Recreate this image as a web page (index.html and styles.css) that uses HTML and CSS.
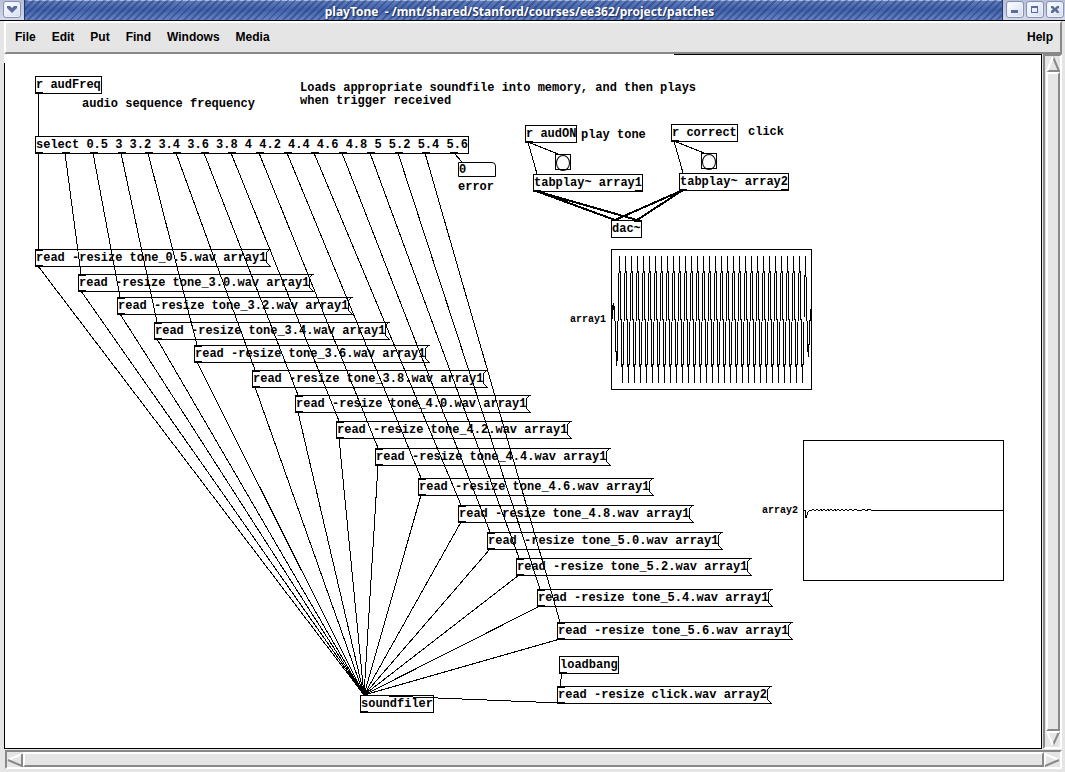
FILE: index.html
```html
<!DOCTYPE html>
<html lang="en">
<head>
<meta charset="utf-8">
<title>playTone</title>
<link rel="stylesheet" href="styles.css">
</head>
<body>
<header class="titlebar">
  <div class="title-group">
    <button class="winbtn" aria-label="Window menu"><svg width="16" height="16" viewBox="0 0 16 16"><path d="M3 4h3l2 2 2-2h3v2l-5 5-5-5z"/></svg></button>
  </div>
  <h1 class="title">playTone  - /mnt/shared/Stanford/courses/ee362/project/patches</h1>
  <div class="title-group title-group-right">
    <button class="winbtn" aria-label="Minimize"><svg width="16" height="16" viewBox="0 0 16 16"><path d="M4 8h7v3H4z"/></svg></button>
    <button class="winbtn" aria-label="Maximize"><svg width="16" height="16" viewBox="0 0 16 16"><path fill-rule="evenodd" d="M4 4h7v7H4zM5 6v4h5V6z"/></svg></button>
    <button class="winbtn" aria-label="Close"><svg width="16" height="16" viewBox="0 0 16 16"><path d="M4 4h2l2 2 2-2h2v2l-2 1 2 3v1h-2L8 9l-2 2H4V9l2-2-2-1z"/></svg></button>
  </div>
</header>
<nav class="menubar">
  <button>File</button><button>Edit</button><button>Put</button><button>Find</button><button>Windows</button><button>Media</button><button class="help">Help</button>
</nav>
<div class="workspace">
<main class="canvas">
  <div class="obj n-audfreq">r audFreq</div>
  <p class="note n-seq">audio sequence frequency</p>
  <p class="note n-loads">Loads appropriate soundfile into memory, and then plays
when trigger received</p>
  <div class="obj n-select">select 0.5 3 3.2 3.4 3.6 3.8 4 4.2 4.4 4.6 4.8 5 5.2 5.4 5.6</div>
  <input class="number" id="error" value="0"><label class="note n-error" for="error">error</label>
  <div class="obj n-audon">r audON</div>
  <p class="note n-play">play tone</p>
  <div class="obj n-correct">r correct</div>
  <p class="note n-click">click</p>
  <button class="bang n-bang1" aria-label="Bang play tone"></button>
  <button class="bang n-bang2" aria-label="Bang click"></button>
  <div class="obj n-tab1">tabplay~ array1</div>
  <div class="obj n-tab2">tabplay~ array2</div>
  <div class="obj n-dac">dac~</div>
  <div class="msg m05">read -resize tone_0.5.wav array1</div>
  <div class="msg m30">read -resize tone_3.0.wav array1</div>
  <div class="msg m32">read -resize tone_3.2.wav array1</div>
  <div class="msg m34">read -resize tone_3.4.wav array1</div>
  <div class="msg m36">read -resize tone_3.6.wav array1</div>
  <div class="msg m38">read -resize tone_3.8.wav array1</div>
  <div class="msg m40">read -resize tone_4.0.wav array1</div>
  <div class="msg m42">read -resize tone_4.2.wav array1</div>
  <div class="msg m44">read -resize tone_4.4.wav array1</div>
  <div class="msg m46">read -resize tone_4.6.wav array1</div>
  <div class="msg m48">read -resize tone_4.8.wav array1</div>
  <div class="msg m50">read -resize tone_5.0.wav array1</div>
  <div class="msg m52">read -resize tone_5.2.wav array1</div>
  <div class="msg m54">read -resize tone_5.4.wav array1</div>
  <div class="msg m56">read -resize tone_5.6.wav array1</div>
  <div class="obj n-loadbang">loadbang</div>
  <div class="msg mclick">read -resize click.wav array2</div>
  <div class="obj n-soundfiler">soundfiler</div>
  <p class="graph-label n-array1">array1</p>
  <p class="graph-label n-array2">array2</p>
  <svg class="wires" width="1036" height="694" aria-hidden="true">
    <defs>
      <pattern id="wave" width="6" height="140" x="618" y="249" patternUnits="userSpaceOnUse">
        <path class="ink" d="M0 24h1v48h-1zM1 7h1v17h-1zM2 22h1v49h-1zM3 70h1v48h-1zM4 115h1v19h-1zM5 73h1v43h-1z"/>
      </pattern>
      <path id="flag" d="M0 0l-4 4v9l4 4"/>
    </defs>
    <g transform="translate(-4 -54)">
      <g class="line" transform="translate(-1 -1)">
        <path d="M39 94V137M39 154V250M66 154L82 275M94 154L121 298M122 154L158 323M149 154L198 346M177 154L256 371M205 154L299 396M232 154L340 422M260 154L379 449M288 154L422 479M315 154L462 506M343 154L491 533M371 154L520 559M399 154L541 590M426 154L561 623"/>
        <path d="M39 267L365 696M82 292L365 696M121 315L365 696M158 340L365 696M198 363L365 696M256 388L365 696M299 413L365 696M340 439L365 696M379 466L365 696M422 496L365 696M462 523L365 696M491 550L365 696M520 576L365 696M541 607L365 696M561 640L365 696M561 704L365 696"/>
        <path d="M455 154L463 163M529 143L538 175M529 143L559 155M675 142L684 174M675 142L705 154M563 674L561 687"/>
        <path class="signal" d="M537 192L616 221M537 192L638 221M684 191L616 221M684 191L638 221"/>
        <path d="M804 441H1004V581H804V441zM612 250H812V390H612z"/>
        <path d="M804 511h2l1 8 2-6 2-2h2l1-1 2 2 2-2 2 2 2-2 1 2 2-2 2 2 2-2 1 2 2-2 2 2 2-2 1 2 2-2 2 2 2-2 2 2 2-2 2 2 2-2 2 1h2l2-1 2 2 2-1h2l2-1 2 2 3-2 2 1H1004"/>
        <use href="#flag" x="271" y="250"/><use href="#flag" x="314" y="275"/><use href="#flag" x="353" y="298"/><use href="#flag" x="390" y="323"/><use href="#flag" x="430" y="346"/><use href="#flag" x="488" y="371"/><use href="#flag" x="531" y="396"/><use href="#flag" x="572" y="422"/><use href="#flag" x="611" y="449"/><use href="#flag" x="654" y="479"/><use href="#flag" x="694" y="506"/><use href="#flag" x="723" y="533"/><use href="#flag" x="752" y="559"/><use href="#flag" x="773" y="590"/><use href="#flag" x="793" y="623"/><use href="#flag" x="772" y="687"/>
      </g>
      <path class="ink" d="M612 305h1v14h-1zM613 303h1v7h-1zM614 306h1v15h-1zM615 321h1v31h-1zM616 351h1v15h-1zM617 321h1v40h-1z"/>
      <rect x="618" y="249" width="186" height="140" fill="url(#wave)"/>
      <path class="ink" d="M804 275h1v42h-1zM805 256h1v21h-1zM806 277h1v44h-1zM807 321h1v31h-1zM808 344h1v13h-1zM809 320h1v25h-1zM810 309h1v12h-1z"/>
      <path class="ink" d="M62 152h8v1h-8zM90 152h8v1h-8zM118 152h8v1h-8zM145 152h8v1h-8zM173 152h8v1h-8zM201 152h8v1h-8zM228 152h8v1h-8zM256 152h8v1h-8zM284 152h8v1h-8zM311 152h8v1h-8zM339 152h8v1h-8zM367 152h8v1h-8zM395 152h8v1h-8zM422 152h8v1h-8zM450 152h8v1h-8zM635 190h8v1h-8zM781 189h8v1h-8zM634 221h8v1h-8z"/>
    </g>
  </svg>
</main>
<div class="scroll scroll-v">
  <button class="arrow" aria-label="Scroll up"><svg width="14" height="16" viewBox="0 0 14 16"><path class="dark" d="M7 1l6 14H1"/><path class="light" d="M1 15L7 1"/></svg></button>
  <div class="thumb"></div>
  <button class="arrow" aria-label="Scroll down"><svg width="14" height="16" viewBox="0 0 14 16"><path class="dark" d="M13 1L7 14"/><path class="light" d="M13 1H1l6 13"/></svg></button>
</div>
</div>
<div class="scroll scroll-h">
  <button class="arrow" aria-label="Scroll left"><svg width="16" height="14" viewBox="0 0 16 14"><path class="light" d="M15 1L1 7"/><path class="dark" d="M15 1v12L1 7"/></svg></button>
  <div class="thumb"></div>
  <button class="arrow" aria-label="Scroll right"><svg width="16" height="14" viewBox="0 0 16 14"><path class="light" d="M1 13V1l14 6"/><path class="dark" d="M15 7L1 13"/></svg></button>
</div>
</body>
</html>
```
FILE: styles.css
```css
* { box-sizing: border-box; }
body {
  margin: 0;
  height: 100vh;
  display: flex;
  flex-direction: column;
  overflow: hidden;
  background: #e5e5e5;
  color: #000;
}
button { margin: 0; padding: 0; border: 0; background: none; color: inherit; font: inherit; }
svg { display: block; }

.titlebar {
  flex: none;
  height: 21px;
  display: flex;
  border-bottom: 1px solid #000;
  background:
    repeating-linear-gradient(135deg, transparent 0 3px, rgba(25, 45, 110, 0.4) 3px 5px),
    linear-gradient(#a9bbdf 0 1px, #5f7dba 1px, #4262aa 50%, #6484c2);
}
.title {
  flex: 1;
  margin: 0;
  padding-left: 12px;
  text-align: center;
  white-space: pre;
  font: 700 12px/23px "Noto Sans", sans-serif;
  color: #fff;
  text-shadow: 1px 1px 1px #1b2a55;
}
.title-group {
  display: flex;
  gap: 2px;
  padding: 1px 3px;
  background: linear-gradient(#b9bfd4, #d3d9ea);
  border-right: 1px solid #23366c;
}
.title-group-right { border-right: 0; border-left: 1px solid #23366c; padding: 1px 1px 1px 3px; }
.winbtn {
  width: 18px;
  height: 17px;
  border: 1px solid #8492b8;
  border-radius: 3px;
  background: linear-gradient(135deg, #fff, #d5dcf0);
  box-shadow: inset 0 0 0 1px #eef1fa;
}
.winbtn path { fill: #5b6c99; }

.menubar {
  flex: none;
  height: 33px;
  margin: 0 3px 0 4px;
  padding: 0 7px 2px 9px;
  display: flex;
  align-items: center;
  gap: 16px;
  border: 2px solid #fff;
  border-right-color: #888;
  border-bottom-color: #888;
  font: bold 12px/16px "Liberation Sans", sans-serif;
}
.help { margin-left: auto; }

.workspace { flex: 1; min-height: 0; display: flex; gap: 1px; padding: 0 3px 0 4px; }
.canvas {
  flex: 1;
  position: relative;
  overflow: hidden;
  border-right: 1px solid #000;
  border-bottom: 1px solid #000;
  background:
    linear-gradient(#000, #000) 670px 0 / 100% 1px no-repeat,
    linear-gradient(#000, #000) 0 9px / 1px 100% no-repeat,
    #fff;
  font: bold 12px/13px "Liberation Mono", monospace;
}
.wires { position: absolute; left: 0; top: 0; pointer-events: none; shape-rendering: crispEdges; }
.line { fill: none; stroke: #000; stroke-width: 1; }
.signal { stroke-width: 2; }
.ink { fill: #000; }

.obj, .msg {
  position: absolute;
  height: 18px;
  padding-top: 2px;
  border: 1px solid #000;
  white-space: pre;
}
.msg { width: 236px; border-right: 0; }
.obj::after, .msg::before, .msg::after {
  content: "";
  position: absolute;
  left: 0;
  width: 7px;
  height: 1px;
  background: #000;
}
.obj::after, .msg::after { bottom: 0; }
.msg::before { top: 0; }
.note, .graph-label { position: absolute; margin: 0; white-space: pre; }
.graph-label { font-size: 10px; }
.number {
  position: absolute;
  left: 454px;
  top: 108px;
  width: 38px;
  height: 15px;
  margin: 0;
  padding: 1px 0 0 0;
  border: 1px solid #000;
  border-top-right-radius: 4px;
  background: transparent;
  font: inherit;
}
.bang { position: absolute; width: 16px; height: 16px; border: 1px solid #000; }
.bang::after { content: ""; display: block; height: 14px; border: 1px solid #000; border-radius: 50%; }

.n-audfreq { left: 31px; top: 22px; }
.n-seq { left: 78px; top: 44px; }
.n-loads { left: 296px; top: 28px; }
.n-select { left: 31px; top: 82px; }
.n-error { left: 454px; top: 127px; }
.n-audon { left: 521px; top: 71px; }
.n-play { left: 577px; top: 75px; }
.n-correct { left: 667px; top: 70px; }
.n-click { left: 744px; top: 72px; }
.n-bang1 { left: 551px; top: 100px; }
.n-bang2 { left: 697px; top: 99px; }
.n-tab1 { left: 529px; top: 120px; }
.n-tab2 { left: 675px; top: 119px; }
.n-dac { left: 607px; top: 166px; }
.n-dac::after { display: none; }
.n-loadbang { left: 555px; top: 602px; }
.n-soundfiler { left: 356px; top: 641px; }
.n-array1 { left: 566px; top: 259px; }
.n-array2 { left: 758px; top: 450px; }
.m05 { left: 31px; top: 195px; }
.m30 { left: 74px; top: 220px; }
.m32 { left: 113px; top: 243px; }
.m34 { left: 150px; top: 268px; }
.m36 { left: 190px; top: 291px; }
.m38 { left: 248px; top: 316px; }
.m40 { left: 291px; top: 341px; }
.m42 { left: 332px; top: 367px; }
.m44 { left: 371px; top: 394px; }
.m46 { left: 414px; top: 424px; }
.m48 { left: 454px; top: 451px; }
.m50 { left: 483px; top: 478px; }
.m52 { left: 512px; top: 504px; }
.m54 { left: 533px; top: 535px; }
.m56 { left: 553px; top: 568px; }
.mclick { left: 553px; top: 632px; width: 215px; }

.scroll {
  flex: none;
  display: flex;
  border: 2px solid #888;
  border-right-color: #fff;
  border-bottom-color: #fff;
}
.scroll-v { width: 19px; flex-direction: column; padding: 0 0 0 1px; }
.scroll-h { height: 19px; margin: 1px 3px 3px 5px; padding: 0; }
.thumb { flex: 1; border: 2px solid #fff; border-right-color: #888; border-bottom-color: #888; }
.arrow svg { fill: none; stroke-width: 2; }
.dark { stroke: #888; }
.light { stroke: #fff; }
```
